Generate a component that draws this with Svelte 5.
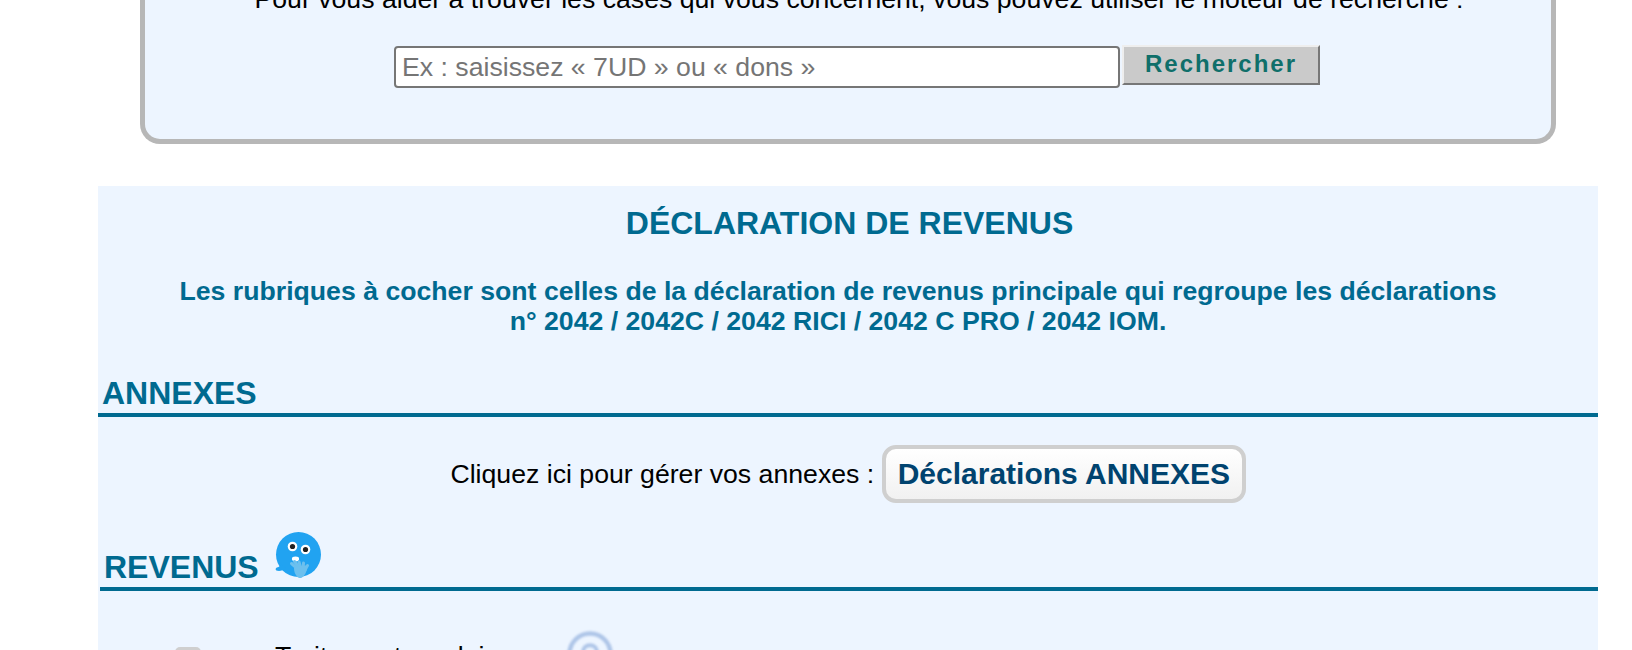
<script lang="ts">
    const title = "DÉCLARATION DE REVENUS";
</script>

<div class="page">
    <section class="search-box">
        <p class="search-help">Pour vous aider à trouver les cases qui vous concernent, vous pouvez utiliser le moteur de recherche :</p>
        <form class="search-form">
            <input class="search-input" type="text" placeholder="Ex : saisissez « 7UD » ou « dons »" />
            <button class="search-btn" type="button">Rechercher</button>
        </form>
    </section>

    <main class="panel">
        <h1 class="panel-title">{title}</h1>
        <p class="panel-sub">Les rubriques à cocher sont celles de la déclaration de revenus principale qui regroupe les déclarations<br />n° 2042 / 2042C / 2042 RICI / 2042 C PRO / 2042 IOM.</p>

        <h2 class="section-head annexes">ANNEXES</h2>
        <div class="annexes-row">
            <span>Cliquez ici pour gérer vos annexes :</span>
            <button class="annexes-btn" type="button">Déclarations ANNEXES</button>
        </div>

        <h2 class="section-head revenus">
            REVENUS
            <svg class="mascot" viewBox="0 0 46 47" width="46" height="47" aria-hidden="true">
                <circle cx="23.500" cy="22.500" r="22.500" fill="#21a3f1" />
                <path d="M6 32c-.5 1.800-1.800 2.800-4 3.500-1.800.6-1.800 3 .2 3.300 3 .5 6-.4 8.500-2.300z" fill="#21a3f1" />
                <circle cx="17.500" cy="14.500" r="4.800" fill="#fff" />
                <circle cx="17.500" cy="14.500" r="2.600" fill="#222" />
                <circle cx="30.500" cy="17.500" r="4.800" fill="#fff" />
                <circle cx="30.500" cy="17.500" r="2.600" fill="#222" />
                <ellipse cx="20.500" cy="27" rx="3.600" ry="2.400" fill="#fff" />
                <g fill="none" stroke="#6cc0ee" stroke-width="3" stroke-linecap="round">
                    <path d="M24 38L16.500 31.500" />
                    <path d="M25 37L19.500 29.500" />
                    <path d="M26 37L24 30" />
                    <path d="M28 37L28.500 31" />
                    <path d="M30 38L32.500 33.500" />
                </g>
                <path d="M19 36c3-2 10-3 13-2 .5 4-1.500 9-5 11.500-1.500 1-3.500.5-4.500-.5-2.500-2.500-3.500-5.500-3.500-9z" fill="#6cc0ee" />
            </svg>
        </h2>

        <div class="row">
            <span class="check"></span>
            <span class="row-label">Traitements, salaires</span>
            <svg class="help" viewBox="0 0 46 46" width="46" height="46" aria-hidden="true">
                <circle cx="23" cy="23" r="20.500" fill="none" stroke="#aec5e8" stroke-width="4.500" />
                <path d="M16 21c0-9 14-9 14 0 0 5-6.500 5-7 10" fill="none" stroke="#aec5e8" stroke-width="4" />
            </svg>
        </div>
    </main>
</div>

<style>
    :global(body) {
        margin: 0;
        height: 650px;
        overflow: hidden;
        background: #fff;
        font-family: "Liberation Sans", Arial, sans-serif;
    }

    .page {
        margin-top: -16px;
        padding-left: 98px;
        width: 1500px;
    }

    .search-box {
        box-sizing: border-box;
        width: 1416px;
        margin-left: 42px;
        height: 160px;
        background: #edf5ff;
        border: 5px solid #b7b7b7;
        border-top: 0;
        border-radius: 0 0 20px 20px;
        text-align: center;
    }

    .search-help {
        margin: 0;
        padding-top: 1px;
        padding-left: 22px;
        font-size: 26.670px;
        line-height: 28px;
        color: #000;
        white-space: nowrap;
    }

    .search-form {
        display: flex;
        justify-content: center;
        align-items: flex-start;
        gap: 2px;
        margin-top: 33px;
        padding-left: 18px;
    }

    .search-input {
        box-sizing: border-box;
        width: 726px;
        height: 42px;
        padding: 0 6px;
        border: 2px solid #767676;
        border-radius: 4px;
        background: #fff;
        font-family: inherit;
        font-size: 26.670px;
    }

    .search-input::placeholder {
        color: #757575;
        opacity: 1;
    }

    .search-btn {
        box-sizing: border-box;
        width: 198px;
        height: 40px;
        margin-top: -1px;
        padding: 0 0 3px;
        background: #cacaca;
        border: 2px solid;
        border-color: #eee #777 #777 #eee;
        color: #0f6f6a;
        font-family: inherit;
        font-weight: bold;
        font-size: 24px;
        letter-spacing: 2px;
    }

    .panel {
        box-sizing: border-box;
        width: 1500px;
        height: 500px;
        margin-top: 42px;
        padding-top: 19px;
        background: #edf5ff;
        text-align: center;
    }

    .panel-title {
        margin: 0;
        padding-left: 3px;
        font-size: 32px;
        line-height: 36px;
        color: #006a90;
    }

    .panel-sub {
        margin: 35px 0 0 0;
        padding-right: 20px;
        font-size: 26.670px;
        line-height: 30px;
        font-weight: bold;
        color: #006a90;
    }

    .section-head {
        box-sizing: border-box;
        margin: 0;
        text-align: left;
        font-size: 32px;
        line-height: 38px;
        color: #006a90;
        border-bottom: 4px solid #006a90;
    }

    .annexes {
        margin-top: 38px;
        padding-top: 1px;
        padding-bottom: 1px;
        line-height: 37px;
        padding-left: 4px;
    }

    .annexes-row {
        display: flex;
        justify-content: center;
        align-items: center;
        gap: 8px;
        margin-top: 28px;
        font-size: 26.670px;
        color: #000;
    }

    .annexes-btn {
        height: 58px;
        padding: 0 11.500px;
        background: linear-gradient(#fff, #f1f1f1);
        border: 4px solid #cfcfcf;
        border-radius: 14px;
        color: #00436f;
        font-family: inherit;
        font-size: 30px;
        font-weight: bold;
    }

    .revenus {
        display: flex;
        align-items: flex-end;
        gap: 16px;
        margin: 29px 0 0 2px;
        padding-left: 4px;
        line-height: 36px;
        padding-bottom: 2px;
    }

    .mascot {
        margin-bottom: 6px;
    }

    .row {
        display: flex;
        align-items: flex-start;
        margin-top: 50px;
        padding-left: 77px;
        font-size: 26.670px;
        color: #000;
    }

    .check {
        width: 26px;
        height: 27px;
        border-radius: 5px;
        background: #cfcfcf;
        margin-top: 6px;
    }

    .row-label {
        margin-left: 74px;
    }

    .help {
        margin: -10px 0 0 46px;
        filter: blur(0.8px);
    }
</style>
